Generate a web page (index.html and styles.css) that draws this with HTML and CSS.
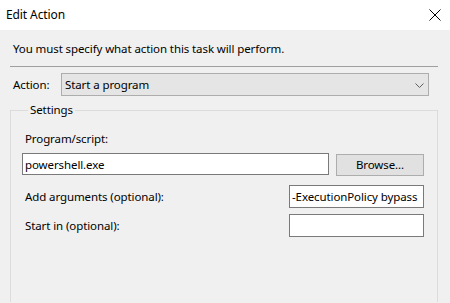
FILE: index.html
```html
<!DOCTYPE html>
<html lang="en">

<head>
  <meta charset="UTF-8">
  <title>Edit Action</title>
  <link rel="stylesheet" href="styles.css">
</head>

<body>
  <div class="title-bar">
    <span class="title">Edit Action</span>
    <svg class="close" width="12" height="12" viewBox="0 0 12 12">
      <path d="M0.5 0.5 L11.5 11.5 M11.5 0.5 L0.5 11.5" stroke="#000" stroke-width="1" fill="none" />
    </svg>
  </div>

  <div class="content">
    <div class="intro">You must specify what action this task will perform.</div>

    <div class="action-row">
      <span class="action-label">Action:</span>
      <div class="combo">
        <span>Start a program</span>
        <svg width="9" height="5" viewBox="0 0 9 5">
          <path d="M0.5 0.5 L4.5 4.5 L8.5 0.5" stroke="#606060" stroke-width="1" fill="none" />
        </svg>
      </div>
    </div>

    <div class="settings">
      <div class="legend">Settings</div>
      <div class="field-label first">Program/script:</div>
      <div class="program-row">
        <input class="text-box program" type="text" value="powershell.exe" readonly>
        <button class="browse">Browse...</button>
      </div>
      <div class="field-row">
        <span class="field-label">Add arguments (optional):</span>
        <input class="text-box short" type="text" value="-ExecutionPolicy bypass" readonly>
      </div>
      <div class="field-row">
        <span class="field-label">Start in (optional):</span>
        <input class="text-box short" type="text" value="" readonly>
      </div>
    </div>
  </div>
</body>

</html>
```

FILE: styles.css
```css
body {
  margin: 0;
  background: #f0f0f0;
  font-family: "Noto Sans", "Open Sans", sans-serif;
  font-size: 11.5px;
  letter-spacing: -0.1px;
  line-height: 16px;
  color: #000;
  overflow: hidden;
}

.title-bar {
  height: 30px;
  background: #fff;
  display: flex;
  align-items: center;
  justify-content: space-between;
  padding: 0 9px 0 6px;
  font-size: 12px;
}

.title {
  margin-top: -1px;
}

.close {
  margin-top: -1px;
}

.content {
  padding: 0 12px 0 10px;
}

.intro {
  padding: 11px 0 0 3px;
  height: 25px;
  border-bottom: 1px solid #a0a0a0;
}

.action-row {
  display: flex;
  align-items: center;
  margin-top: 6px;
}

.action-label {
  width: 48px;
  padding-left: 3px;
  margin-top: 1px;
}

.combo {
  width: 368px;
  height: 23px;
  box-sizing: border-box;
  border: 1px solid #adadad;
  background: #e5e5e5;
  display: flex;
  align-items: center;
  justify-content: space-between;
  padding: 1px 4px 0 3px;
}

.settings {
  box-sizing: border-box;
  margin-top: 14px;
  padding: 0 12px 0 11px;
  border: 1px solid #dcdcdc;
  border-bottom: none;
  height: 192px;
}

.legend {
  width: fit-content;
  margin: -9px 0 0 6px;
  padding: 0 2px;
  background: #f0f0f0;
}

.field-label {
  padding-left: 3px;
}

.field-label.first {
  margin-top: 13px;
}

.program-row {
  display: flex;
  align-items: flex-start;
  gap: 7px;
  margin-top: 6px;
}

.text-box {
  box-sizing: border-box;
  height: 22px;
  border: 1px solid #7a7a7a;
  background: #fff;
  font: inherit;
  letter-spacing: inherit;
  padding: 0 2px;
  margin: 0;
  outline: none;
}

.program {
  width: 307px;
}

.browse {
  width: 88px;
  height: 22px;
  margin-top: 1px;
  border: 1px solid #adadad;
  background: #e1e1e1;
  font: inherit;
  letter-spacing: inherit;
  color: #000;
  padding: 0;
}

.field-row {
  display: flex;
  align-items: center;
  justify-content: space-between;
  margin-top: 9px;
}

.field-row + .field-row {
  margin-top: 6px;
}

.short {
  width: 135px;
  height: 23px;
  margin-right: 1px;
}
```
